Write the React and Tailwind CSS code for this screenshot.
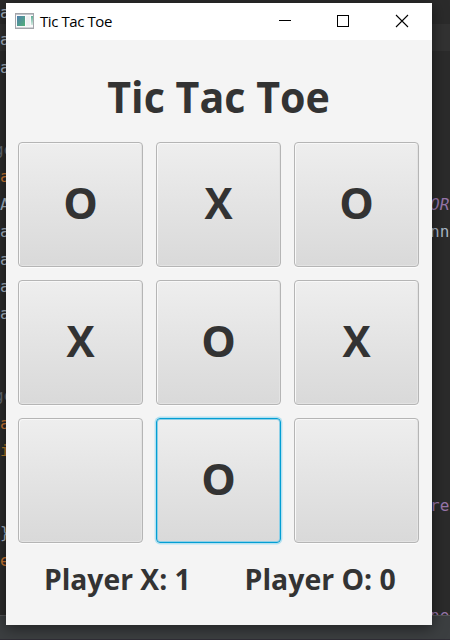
import React from 'react';

const leftCode = [
  ['a', 'text-[#a9b7c6]'], ['a', 'text-[#a9b7c6]'], ['a', 'text-[#a9b7c6]'], ['', ''], ['', ''],
  ['ge', 'text-[#626970] -ml-[6px]'], ['a', 'text-[#cc7832]'], ['A', 'text-[#a9b7c6]'],
  ['a', 'text-[#a9b7c6]'], ['a', 'text-[#a9b7c6]'], ['a', 'text-[#a9b7c6]'], ['a', 'text-[#a9b7c6]'],
  ['', ''], ['', ''], ['ge', 'text-[#626970] -ml-[6px]'], ['a', 'text-[#cc7832]'], ['i', 'text-[#b77b28]'],
  ['', ''], ['', ''], ['}', 'text-[#a9b7c6]'], ['e', 'text-[#cc7832]'], ['', ''], ['', ''],
];

const rightCode = Array.from({ length: 23 }, () => ['', '']);
rightCode[7] = ['OR', 'text-[#9876aa] italic'];
rightCode[8] = ['nn', 'text-[#a9b7c6]'];
rightCode[18] = ['re', 'text-[#9876aa]'];
rightCode[22] = ['ne', 'text-[#9876aa]'];

const board = ['O', 'X', 'O', 'X', 'O', 'X', '', 'O', ''];
const focused = 7;

function Code({ lines }) {
  return lines.map(([text, style], i) => (
    <div key={i} className="h-[27.4px] shrink-0 whitespace-pre leading-[26px]">
      <span className={`block ${style}`}>{text}</span>
    </div>
  ));
}

function AppIcon() {
  return (
    <svg width="19" height="16" viewBox="0 0 19 16">
      <defs>
        <linearGradient id="pane" x1="0" y1="0" x2="1" y2="1">
          <stop offset="0" stopColor="#4f7fae" />
          <stop offset="1" stopColor="#52b078" />
        </linearGradient>
        <linearGradient id="bar" x1="0" y1="0" x2="0" y2="1">
          <stop offset="0" stopColor="#5fae96" />
          <stop offset="1" stopColor="#d5ebe2" />
        </linearGradient>
      </defs>
      <rect x="0.5" y="0.5" width="18" height="15" fill="#fafafb" stroke="#a3a5aa" />
      <path d="M1 1.5H18" stroke="#c4c6cc" />
      <rect x="2" y="3" width="8" height="10" fill="url(#pane)" />
      <rect x="11" y="3" width="4" height="10" fill="#eef0f2" />
      <rect x="16" y="3" width="2" height="9" fill="url(#bar)" />
      <path d="M1 14.5H18" stroke="#d0d2d6" />
    </svg>
  );
}

function TitleBar() {
  return (
    <div className="flex h-[37px] items-center bg-white pl-[9px]">
      <div className="-mt-[2px]">
        <AppIcon />
      </div>
      <span className="-mt-[2px] ml-[6px] text-[15px] leading-5 tracking-[-0.42px] text-black">Tic Tac Toe</span>
      <div className="ml-auto flex h-full">
        <svg width="176" height="37" viewBox="0 0 176 37" fill="none" stroke="#000" shapeRendering="crispEdges">
          <path d="M23 17.5H35" />
          <rect x="81.5" y="12.5" width="11" height="11" />
          <path d="M140 12L152 24M152 12L140 24" shapeRendering="auto" strokeWidth="1.1" />
        </svg>
      </div>
    </div>
  );
}

function Square({ value, active }) {
  return (
    <button
      className={`flex h-[125px] w-[125px] items-center justify-center rounded-[4px] border bg-linear-to-b from-[#eeeeee] to-[#d9d9d9] pb-[3px] text-[43.5px] leading-none font-bold text-[#333333] ${
        active
          ? 'border-[#039ed3] shadow-[0_0_0_1.4px_#b3e1f1,inset_0_0_0_1px_#8fcfe6]'
          : 'border-[#b5b5b5] shadow-[0_1px_0_#fcfcfc,inset_1px_1px_0_#f8f8f8,inset_-1px_-1px_0_#e3e3e3]'
      }`}
    >
      <span className={value === 'X' ? 'scale-x-[0.97]' : ''}>{value}</span>
    </button>
  );
}

export default function App() {
  return (
    <div className="relative h-[640px] w-[450px] overflow-hidden bg-[#2b2b2b] font-['Open_Sans','Noto_Sans',sans-serif]">
      <div className="flex h-[615px] justify-between overflow-hidden bg-[linear-gradient(#2b2b2b_24px,#323232_24px,#323232_51px,#2b2b2b_51px)] font-['DejaVu_Sans_Mono',monospace] text-[16px]">
        <div className="flex w-[12px] flex-col">
          <Code lines={leftCode} />
        </div>
        <div className="flex w-[20px] flex-col">
          <Code lines={rightCode} />
        </div>
      </div>
      <div className="h-[24px] border-t border-[#555657] bg-[#3c3f41]" />
      <div className="h-px bg-[#302e36]" />

      <div className="absolute top-[3px] left-[6px] flex h-[622px] w-[426px] flex-col bg-[#f4f4f4] shadow-[0_3px_14px_rgba(0,0,0,0.5)]">
        <TitleBar />
        <h1 className="mt-[32px] h-[50px] text-center text-[43.5px] leading-[50px] font-bold whitespace-nowrap text-[#333333]">
          <span className="inline-block scale-x-[0.947]">Tic Tac Toe</span>
        </h1>
        <div className="mt-[20px] grid grid-cols-[repeat(3,125px)] gap-[13px] pl-[12px]">
          {board.map((v, i) => (
            <Square key={i} value={v} active={i === focused} />
          ))}
        </div>
        <div className="mt-[16px] flex justify-between pr-[35px] pl-[36px] text-[29px] leading-[40px] font-bold whitespace-nowrap text-[#333333]">
          <span className="inline-block scale-x-[0.975]">Player X: 1</span>
          <span className="inline-block scale-x-[0.98]">Player O: 0</span>
        </div>
      </div>
    </div>
  );
}
